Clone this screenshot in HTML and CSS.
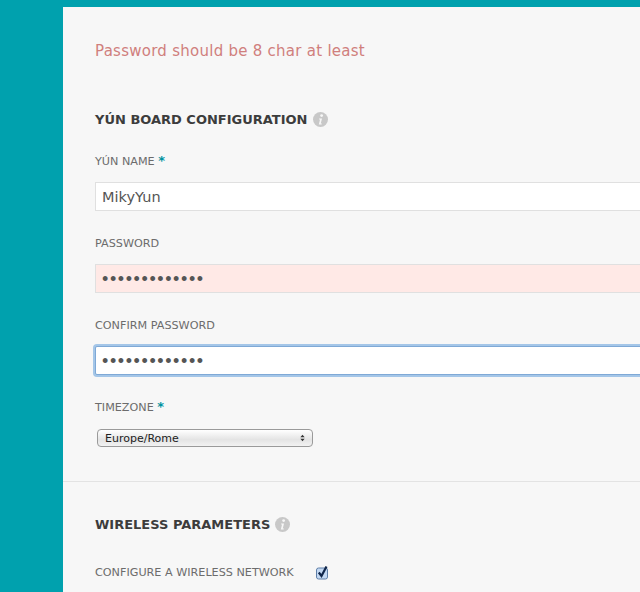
FILE: index.html
```html
<!DOCTYPE html>
<html lang="en">
<head>
<meta charset="utf-8">
<title>Yún board configuration</title>
<link rel="stylesheet" href="styles.css">
</head>
<body>
<main class="panel">
  <section class="section section-board">
    <p class="error">Password should be 8 char at least</p>
    <h2 class="heading">YÚN BOARD CONFIGURATION<svg class="info" viewBox="0 0 16 16" width="15" height="15"><circle cx="8" cy="8" r="8" fill="#c8c8c8"/><circle cx="9.200" cy="3.800" r="1.500" fill="#f7f7f7"/><path d="M6.600 7h3l-1.300 5.200h1.200l-.3 1h-3l1.300-5.200H6.400z" fill="#f7f7f7"/></svg></h2>
    <div class="field">
      <label class="label" for="name">YÚN NAME <span class="req">*</span></label>
      <input class="input" id="name" type="text" value="MikyYun">
    </div>
    <div class="field">
      <label class="label" for="pw">PASSWORD</label>
      <input class="input input-secret input-error" id="pw" type="password" value="1234567890123">
    </div>
    <div class="field">
      <label class="label" for="cpw">CONFIRM PASSWORD</label>
      <input class="input input-secret input-focus" id="cpw" type="password" value="1234567890123">
    </div>
    <div class="field field-last">
      <span class="label">TIMEZONE <span class="req">*</span></span>
      <div class="select"><span>Europe/Rome</span><svg class="arrows" viewBox="0 0 7 10" width="5" height="8"><path d="M3.500 0.500L6.500 4H.5zM3.500 9.500L.5 6h6z" fill="#333"/></svg></div>
    </div>
  </section>
  <section class="section section-wireless">
    <h2 class="heading">WIRELESS PARAMETERS<svg class="info" viewBox="0 0 16 16" width="15" height="15"><circle cx="8" cy="8" r="8" fill="#c8c8c8"/><circle cx="9.200" cy="3.800" r="1.500" fill="#f7f7f7"/><path d="M6.600 7h3l-1.300 5.200h1.200l-.3 1h-3l1.300-5.200H6.400z" fill="#f7f7f7"/></svg></h2>
    <div class="check-row">
      <span class="label label-inline">CONFIGURE A WIRELESS NETWORK</span>
      <svg class="check" viewBox="0 0 14 15" width="14" height="15"><rect x="1.500" y="3" width="11" height="11" rx="2" fill="#c4d9f3" stroke="#5f7fa8"/><path d="M3.800 7.500l2.700 3.500L11.500 1.500" fill="none" stroke="#10264a" stroke-width="2.200"/></svg>
    </div>
  </section>
</main>
</body>
</html>
```
FILE: styles.css
```css
html, body { margin: 0; height: 100%; overflow: hidden; }
body {
  background: #00a1ae;
  padding: 7px 0 0 63px;
  box-sizing: border-box;
  font-family: "DejaVu Sans", sans-serif;
  color: #666;
}
.panel { background: #f7f7f7; width: 800px; height: 800px; }
.section { padding: 0 32px; }
.section-board { padding-top: 34px; padding-bottom: 34px; border-bottom: 1px solid #e3e3e3; }
.section-wireless { padding-top: 33px; }
.error { margin: 0 0 49px; font-size: 15px; line-height: 20px; color: #d07f7d; letter-spacing: 0.26px; }
.heading { margin: 0 0 24px; font-size: 13px; line-height: 20px; font-weight: bold; color: #3c3c3c; display: flex; align-items: center; gap: 5px; }
.info { margin-top: -2px; }
.field { margin-bottom: 25px; }
.field-last { margin-bottom: 0; }
.label { display: block; font-size: 11.2px; line-height: 16px; color: #6c6c6c; margin-bottom: 12px; }
.req { color: #00929f; font-weight: bold; font-size: 13px; line-height: 0; }
.input {
  display: block; box-sizing: border-box; width: 700px; height: 29px; padding: 0 6px; margin: 0;
  border: 1px solid #e0e0e0; background: #fff; font: 14.5px "DejaVu Sans", sans-serif; color: #555; outline: none;
}
.input-secret { font: 18px "Liberation Sans", sans-serif; letter-spacing: 1.6px; padding-top: 2px; }
.input-error { background: #ffe9e6; }
.input-focus { border-color: #7fa9d6; box-shadow: 0 0 0 2px #a4c6e8; border-radius: 2px; }
.select {
  display: flex; align-items: center; justify-content: space-between; box-sizing: border-box;
  width: 216px; height: 18px; margin: 13px 0 0 2px; padding: 0 7px;
  border: 1px solid #9a9a9a; border-radius: 4px;
  background: linear-gradient(#ffffff, #e4e4e4 60%, #f2f2f2);
  font-size: 11px; color: #222;
}
.field-last .label { margin-bottom: 0; }
.arrows { display: block; }
.check-row { display: flex; align-items: center; gap: 21px; margin-top: 30px; }
.label-inline { margin: 0; }
.check { display: block; margin-top: -2px; }
```
